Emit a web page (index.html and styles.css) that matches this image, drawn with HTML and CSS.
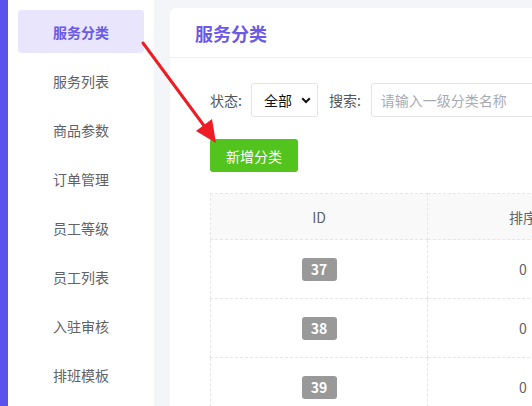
FILE: index.html
```html
<!DOCTYPE html>
<html lang="zh">
<head>
<meta charset="utf-8">
<link rel="stylesheet" href="styles.css">
</head>
<body>
<div class="layout">
  <div class="stripe"></div>
  <nav class="sidebar">
    <a class="menu-item active">服务分类</a>
    <a class="menu-item">服务列表</a>
    <a class="menu-item">商品参数</a>
    <a class="menu-item">订单管理</a>
    <a class="menu-item">员工等级</a>
    <a class="menu-item">员工列表</a>
    <a class="menu-item">入驻审核</a>
    <a class="menu-item">排班模板</a>
  </nav>
  <main class="main">
    <section class="card">
      <header class="card-header">服务分类</header>
      <div class="card-body">
        <div class="filters">
          <span class="label">状态:</span>
          <div class="select">
            <span>全部</span>
            <svg class="chev" width="10" height="7" viewBox="0 0 10 7"><path d="M1.2 1.3 L5 5 L8.8 1.3" fill="none" stroke="#111" stroke-width="2"/></svg>
          </div>
          <span class="label">搜索:</span>
          <div class="input">请输入一级分类名称</div>
        </div>
        <button class="btn-add">新增分类</button>
        <table class="grid">
          <thead>
            <tr><th class="c1">ID</th><th>排序</th></tr>
          </thead>
          <tbody>
            <tr><td class="c1"><span class="badge">37</span></td><td>0</td></tr>
            <tr><td class="c1"><span class="badge">38</span></td><td>0</td></tr>
            <tr><td class="c1"><span class="badge">39</span></td><td>0</td></tr>
          </tbody>
        </table>
      </div>
    </section>
  </main>
</div>
<svg class="arrow" width="532" height="406" viewBox="0 0 532 406">
  <line x1="143" y1="43" x2="205" y2="127" stroke="#ee1c25" stroke-width="3" stroke-linecap="round"/>
  <polygon points="216,143 196,131 212,119" fill="#ee1c25"/>
</svg>
</body>
</html>
```
FILE: styles.css
```css
* { box-sizing: border-box; }
html, body {
  margin: 0;
  padding: 0;
  width: 532px;
  height: 406px;
  overflow: hidden;
  background: #f4f5f9;
  font-family: "Noto Sans CJK SC", "Noto Sans", sans-serif;
  font-size: 14px;
  color: #606266;
}
.layout {
  display: flex;
  height: 406px;
}
.stripe {
  width: 8px;
  flex: none;
  background: #5b52ee;
}
.sidebar {
  width: 146px;
  flex: none;
  background: #fff;
  padding: 10px 10px 0 10px;
  display: flex;
  flex-direction: column;
  gap: 6px;
  overflow: hidden;
}
.menu-item {
  height: 43px;
  flex: none;
  display: flex;
  align-items: center;
  justify-content: center;
  border-radius: 4px;
  color: #606266;
  font-size: 14px;
}
.menu-item.active {
  background: #e8e5fd;
  color: #6a5ae6;
  font-weight: 700;
}
.main {
  flex: 1;
  min-width: 0;
  padding: 8px 0 0 16px;
  display: flex;
  flex-direction: column;
}
.card {
  flex: 1;
  min-height: 0;
  background: #fff;
  border-radius: 6px 0 0 0;
  overflow: hidden;
}
.card-header {
  height: 50px;
  padding-left: 25px;
  display: flex;
  align-items: center;
  font-size: 18px;
  font-weight: 700;
  color: #6a5ae6;
  border-bottom: 1px solid #f0f0f3;
}
.card-body {
  padding: 25px 0 0 40px;
}
.filters {
  display: flex;
  align-items: center;
  height: 34px;
  white-space: nowrap;
}
.label {
  color: #555;
  font-size: 14px;
}
.select {
  flex: none;
  margin-left: 9px;
  width: 67px;
  height: 34px;
  border: 1px solid #e4e4e7;
  border-radius: 3px;
  display: flex;
  align-items: center;
  padding-left: 12px;
  color: #111;
  position: relative;
}
.chev {
  position: absolute;
  right: 6px;
  top: 13px;
}
.select + .label { margin-left: 11px; }
.input {
  flex: none;
  margin-left: 10px;
  width: 200px;
  height: 34px;
  border: 1px solid #e4e4e7;
  border-radius: 3px;
  display: flex;
  align-items: center;
  padding-left: 9px;
  color: #a8abb2;
}
.btn-add {
  display: block;
  margin-top: 22px;
  width: 88px;
  height: 33px;
  border: none;
  border-radius: 3px;
  background: #53c41d;
  color: #fff;
  font-family: inherit;
  font-size: 14px;
  padding: 0;
}
.grid {
  margin-top: 21px;
  border-collapse: collapse;
  width: 409px;
  table-layout: fixed;
}
.grid th, .grid td {
  border: 1px dashed #e6e6e8;
  text-align: center;
  font-weight: 400;
  color: #606266;
  padding: 0;
}
.grid .c1 { width: 217px; }
.grid th {
  height: 46px;
  background: #f9f9fa;
}
.grid td { height: 59px; }
.badge {
  display: inline-block;
  width: 35px;
  height: 23px;
  line-height: 23px;
  border-radius: 3px;
  background: #999;
  color: #fff;
  font-weight: 700;
  font-size: 14px;
  vertical-align: middle;
}
.arrow {
  position: absolute;
  left: 0;
  top: 0;
  pointer-events: none;
}
```
